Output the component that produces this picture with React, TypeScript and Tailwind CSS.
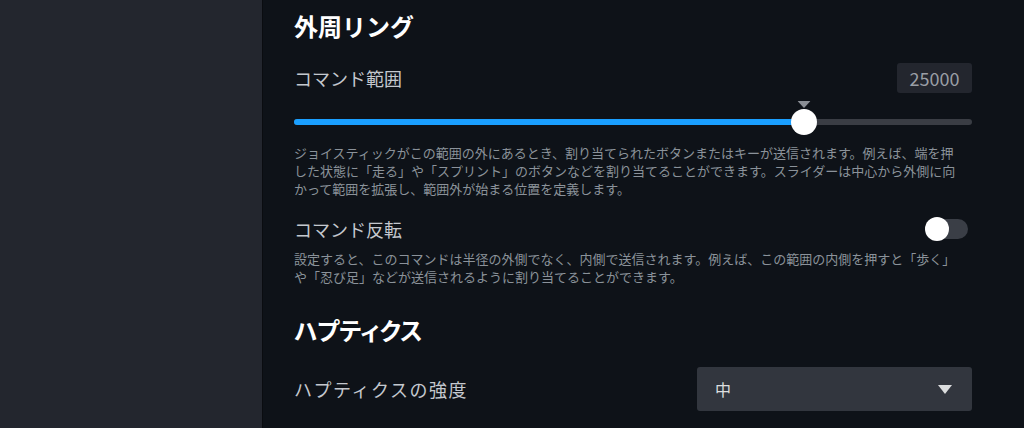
import React from "react";

const font = { fontFamily: '"Noto Sans CJK JP", "Noto Sans", sans-serif' };

function Slider({ percent }: { percent: number }) {
  return (
    <div className="relative mt-[16px] flex h-[26px] items-center">
      <div className="relative h-[6px] w-full rounded-full bg-[#3a3d44]">
        <div
          className="absolute left-0 top-0 h-full rounded-full bg-[#1a9fff]"
          style={{ width: `${percent}%` }}
        />
      </div>
      <div
        className="absolute top-0 h-[26px] w-[26px] -translate-x-1/2 rounded-full bg-white"
        style={{ left: `${percent}%` }}
      />
      <svg
        className="absolute top-[-8px] -translate-x-1/2"
        style={{ left: `${percent}%` }}
        width="13"
        height="7"
        viewBox="0 0 13 7"
      >
        <path d="M0 0h13L6.5 7z" fill="#8a8e95" />
      </svg>
    </div>
  );
}

function Toggle() {
  return (
    <div className="relative h-[24px] w-[43px]">
      <div className="absolute left-[1px] top-[2px] h-[20px] w-[42px] rounded-full bg-[#3a3e46]" />
      <div className="absolute left-0 top-0 h-[24px] w-[24px] rounded-full bg-white" />
    </div>
  );
}

export default function App() {
  return (
    <div className="flex h-[428px] w-[1024px] overflow-hidden bg-[#0e1218]" style={font}>
      <aside className="h-full w-[263px] shrink-0 border-r border-[#0a0c10] bg-[#23262e]" />
      <main className="flex flex-1 flex-col pl-[31px] pr-[52px] pt-[10px]">
        <h2 className="text-[24px] font-bold leading-[32px] text-white">外周リング</h2>

        <div className="mt-[21px] flex h-[30px] items-center justify-between">
          <span className="text-[18px] text-[#c4c8ce]">コマンド範囲</span>
          <div className="flex h-[30px] w-[75px] items-center justify-center rounded-[3px] bg-[#23262e] text-[18px] text-[#9a9ea5]">
            25000
          </div>
        </div>

        <Slider percent={75.2} />

        <p className="mt-[9px] w-[668px] text-[13px] leading-[18px] text-[#8b929a]">
          ジョイスティックがこの範囲の外にあるとき、割り当てられたボタンまたはキーが送信されます。例えば、端を押した状態に「走る」や「スプリント」のボタンなどを割り当てることができます。スライダーは中心から外側に向かって範囲を拡張し、範囲外が始まる位置を定義します。
        </p>

        <div className="mt-[19px] flex h-[24px] items-center justify-between pr-[4px]">
          <span className="text-[18px] text-[#c4c8ce]">コマンド反転</span>
          <Toggle />
        </div>

        <p className="mt-[9px] w-[668px] text-[13px] leading-[18px] text-[#8b929a]">
          設定すると、このコマンドは半径の外側でなく、内側で送信されます。例えば、この範囲の内側を押すと「歩く」や「忍び足」などが送信されるように割り当てることができます。
        </p>

        <h2 className="mt-[28px] text-[24px] font-bold leading-[32px] text-white [font-feature-settings:'palt']">
          ハプティクス
        </h2>

        <div className="mt-[21px] flex h-[44px] items-center justify-between">
          <span className="text-[18px] tracking-[1.5px] text-[#c4c8ce]">ハプティクスの強度</span>
          <div className="flex h-[44px] w-[275px] items-center justify-between rounded-[3px] bg-[#32363e] pl-[18px] pr-[20px]">
            <span className="text-[16px] text-[#dcdedf]">中</span>
            <svg width="14" height="9" viewBox="0 0 14 9">
              <path d="M0 0h14L7 9z" fill="#dcdedf" />
            </svg>
          </div>
        </div>
      </main>
    </div>
  );
}
